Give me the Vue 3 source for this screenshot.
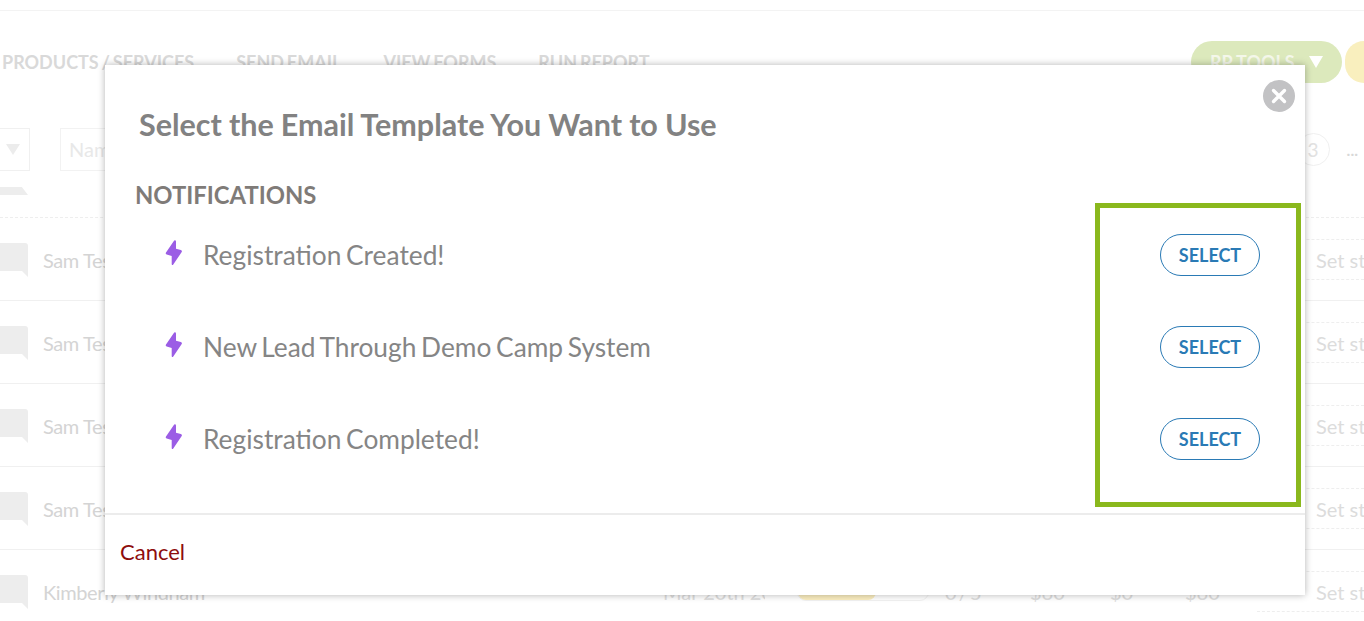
<script setup>
const navItems = ['PRODUCTS / SERVICES', 'SEND EMAIL', 'VIEW FORMS', 'RUN REPORT']
const templates = ['Registration Created!', 'New Lead Through Demo Camp System', 'Registration Completed!']
const rows = [
  { name: 'Sam Test', last: false },
  { name: 'Sam Test', last: false },
  { name: 'Sam Test', last: false },
  { name: 'Sam Test', last: false },
  { name: 'Kimberly Windham', last: true }
]
</script>

<template>
  <div class="page">
    <div class="topline"></div>
    <nav class="nav">
      <a v-for="item in navItems" :key="item" class="nav-item">{{ item }}</a>
      <span class="nav-space"></span>
      <span class="pill-green">RP TOOLS <i class="tri-white"></i></span>
      <span class="pill-yellow"></span>
    </nav>
    <div class="toolbar">
      <span class="select-box"><i class="tri-grey"></i></span>
      <span class="name-box">Name</span>
      <span class="toolbar-space"></span>
      <span class="page-num">3</span>
      <span class="dots">...</span>
    </div>
    <div class="thead"><span class="thead-tab"></span></div>
    <div class="rows">
      <div v-for="(row, i) in rows" :key="i" class="row">
        <svg class="bubble" width="28" height="34" viewBox="0 0 28 34"><path d="M0 0H25Q28 0 28 3V34L22 28H0Z" fill="#ededed"/></svg>
        <span class="row-name">{{ row.name }}</span>
        <span class="row-space"></span>
        <template v-if="row.last">
          <span class="cell date">Mar 20th 2021</span>
          <span class="status"><i></i></span>
          <span class="cell ratio">0 / 5</span>
          <span class="cell m1">$60</span>
          <span class="cell m2">$0</span>
          <span class="cell m3">$60</span>
        </template>
        <span class="set-status">Set status</span>
      </div>
    </div>

    <div class="modal">
      <button class="close" aria-label="Close">
        <svg width="32" height="32" viewBox="0 0 32 32"><circle cx="16" cy="16" r="16" fill="#c2c2c4"/><path d="M10.5 10.5L21.5 21.5M21.5 10.5L10.5 21.5" stroke="#fff" stroke-width="3.4" stroke-linecap="round"/></svg>
      </button>
      <h2 class="title">Select the Email Template You Want to Use</h2>
      <div class="body">
        <h3 class="section">NOTIFICATIONS</h3>
        <ul class="list">
          <li v-for="t in templates" :key="t" class="item">
            <svg class="bolt" width="18" height="26" viewBox="0 0 18 26"><path d="M9.2 0.6L1 12.6Q0.2 14 1.7 14.5L6.7 16L6.7 24.2Q7.2 25.8 8.3 24.6L16.7 12Q17.4 10.4 15.8 10L11 8.8L11 1.4Q10.6 -0.4 9.2 0.6Z" fill="#9b5de5"/></svg>
            <span class="item-text">{{ t }}</span>
            <button class="select">SELECT</button>
          </li>
        </ul>
      </div>
      <div class="footer"><a class="cancel">Cancel</a></div>
      <div class="highlight"></div>
    </div>
  </div>
</template>

<style>
html, body { margin: 0; background: #fff; overflow: hidden; }
</style>

<style scoped>
.page {
  position: relative;
  width: 1364px;
  height: 621px;
  overflow: hidden;
  background: #fff;
  font-family: Lato, "Liberation Sans", sans-serif;
}
.topline { height: 10px; border-bottom: 1px solid #f3f3f3; }
.nav {
  display: flex;
  align-items: center;
  height: 42px;
  margin-top: 30px;
  padding-left: 2px;
  color: #d9d9d9;
  font-size: 18px;
  font-weight: 700;
}
.nav-item { margin-right: 42px; white-space: nowrap; word-spacing: -1.5px; }
.nav-space { flex: 1; }
.pill-green {
  display: flex;
  align-items: center;
  width: 151px;
  height: 42px;
  padding-left: 19px;
  box-sizing: border-box;
  border-radius: 21px;
  background: #dce9bc;
  color: #f4f7ea;
  white-space: pre;
  margin-right: 3px;
}
.tri-white {
  width: 0; height: 0; margin-left: 10px;
  border-left: 7.5px solid transparent; border-right: 7.5px solid transparent; border-top: 12px solid #fff;
}
.pill-yellow { width: 19px; height: 42px; border-radius: 21px 0 0 21px; background: #f9efbe; }
.toolbar {
  display: flex;
  align-items: center;
  height: 44px;
  margin-top: 44px;
  color: #e8e8e8;
  font-size: 20px;
}
.select-box {
  display: flex; align-items: center; justify-content: flex-end;
  width: 30px; height: 43px; box-sizing: border-box; padding-right: 9px;
  border: 1px solid #f0f0f0; border-left: 0;
}
.tri-grey { width: 0; height: 0; border-left: 7px solid transparent; border-right: 7px solid transparent; border-top: 11px solid #ececec; }
.name-box {
  display: flex; align-items: center;
  width: 120px; height: 43px; box-sizing: border-box; padding-left: 8px; margin-left: 30px;
  border: 1px solid #f2f2f2;
}
.toolbar-space { flex: 1; }
.page-num {
  display: flex; align-items: center; justify-content: center;
  width: 31px; height: 31px; border: 1px solid #f0f0f0; border-radius: 50%; margin-right: 17px; color: #e2e2e2; font-size: 19px;
}
.dots { margin-right: 6px; color: #d8d8d8; font-size: 16px; font-weight: 700; }
.thead { height: 30px; margin-top: 16px; border-bottom: 1px dashed #eeeeee; }
.thead-tab { display: block; width: 28px; height: 8px; background: #ededed; clip-path: polygon(0 0, 78% 0, 100% 100%, 0 100%); }
.rows { display: flex; flex-direction: column; }
.row {
  display: flex;
  align-items: center;
  height: 83px;
  box-sizing: border-box;
  padding-top: 1px;
  border-bottom: 1px solid #f0f0f0;
  color: #d4d4d4;
  font-size: 20px;
}
.bubble { margin-right: 15px; flex: none; }
.row-name { white-space: nowrap; letter-spacing: -0.4px; }
.row-space { flex: 1; }
.cell { white-space: nowrap; color: #dedede; }
.date { margin-right: 32px; width: 102px; overflow: hidden; }
.status { width: 132px; height: 18px; border: 1px solid #f2f2f2; border-radius: 9px; margin-right: 16px; box-sizing: border-box; }
.status i { display: block; width: 78px; height: 16px; background: #fbeec0; border-radius: 8px; }
.ratio { width: 85px; word-spacing: -3px; }
.m1 { width: 80px; }
.m2 { width: 75px; }
.m3 { width: 72px; }
.set-status {
  display: flex;
  align-items: center;
  flex: none;
  width: 107px;
  height: 41px;
  box-sizing: border-box;
  padding-left: 59px;
  overflow: hidden;
  border-top: 1px dashed #eeeeee;
  border-bottom: 1px dashed #eeeeee;
  color: #dcdcdc;
  white-space: nowrap;
}
.modal {
  position: absolute;
  left: 105px;
  top: 65px;
  display: flex;
  flex-direction: column;
  width: 1200px;
  height: 530px;
  background: #fff;
  box-shadow: 0 0 7px rgba(0, 0, 0, 0.3);
}
.close {
  position: absolute;
  top: 15px;
  right: 10px;
  width: 32px;
  height: 32px;
  padding: 0;
  border: 0;
  background: none;
}
.title {
  margin: 40px 0 0 34px;
  color: #828282;
  font-size: 30.5px;
  line-height: 38px;
  font-weight: 700;
  word-spacing: -0.4px;
}
.body { flex: 1; padding: 0 45px 0 30px; }
.section {
  margin: 36px 0 0;
  color: #7f7b78;
  font-size: 23.8px;
  line-height: 32px;
  font-weight: 700;
}
.list { margin: 0; padding: 0; list-style: none; }
.item {
  display: flex;
  align-items: center;
  height: 92px;
  padding-left: 29.5px;
}
.item:first-child { margin-top: -2px; }
.bolt { flex: none; margin-right: 20.5px; margin-top: -4px; }
.item-text {
  flex: 1;
  color: #858585;
  font-size: 26.3px;
  word-spacing: -2px;
}
.select {
  width: 100px;
  height: 42px;
  padding: 0;
  box-sizing: border-box;
  border: 1px solid #2a7ab5;
  border-radius: 21px;
  background: #fff;
  color: #2a7ab5;
  font-family: inherit;
  font-size: 18px;
  font-weight: 700;
}
.footer {
  height: 82px;
  box-sizing: border-box;
  padding: 22px 0 0 15px;
  border-top: 2px solid #ececec;
}
.cancel { color: #8e0d0d; font-size: 22px; line-height: 30px; }
.highlight {
  position: absolute;
  left: 990px;
  top: 138px;
  width: 206px;
  height: 304px;
  box-sizing: border-box;
  border: 5px solid #8ab81d;
  pointer-events: none;
}
</style>
